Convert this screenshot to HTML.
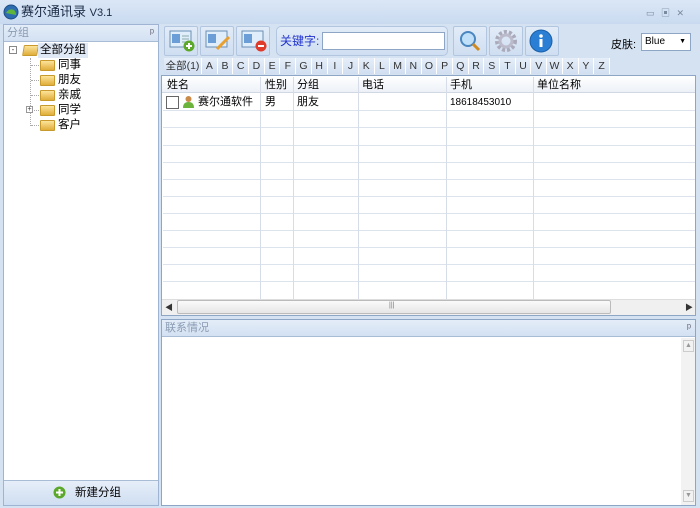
<!DOCTYPE html>
<html><head><meta charset="utf-8"><style>
*{margin:0;padding:0;box-sizing:border-box}
body{width:700px;height:508px;overflow:hidden;background:#d5e2f2;font-family:"Liberation Sans","Noto Sans CJK SC",sans-serif;font-size:11px;color:#000;position:relative}
.a{position:absolute}
.title{left:0;top:0;width:700px;height:24px;background:linear-gradient(#dbe7f6,#c9daf0);}
.hdr{background:linear-gradient(#e4edf8,#d3e1f3);color:#8a9bb3;font-size:11px;padding-left:3px;line-height:16px}
.tb{border:1px solid #b3c6e0;background:linear-gradient(#e2ecf8,#cfdef1);border-radius:2px}
.let{top:58px;height:16px;line-height:16px;font-size:10.5px;color:#333;text-align:center;background:linear-gradient(#e6eef9,#d1dff1);border-right:1px solid #fff}
.vl{top:77px;width:1px;height:222px;background:#d6dde8}
.hl{left:163px;width:532px;height:1px;background:#dde3ec}
.folder{width:15px;height:11px;background:linear-gradient(#fbe49a,#e0ad3a);border:1px solid #c89a2c;border-radius:1px}
.hd{width:8px;height:1px;border-top:1px dotted #aaa}
</style></head><body>
<div class="a title"></div>
<svg class="a" style="left:3px;top:4px" width="16" height="16"><circle cx="8" cy="8" r="7" fill="#2e6cb0"/><path d="M3 9q3-5 8-3q2 2 2 5" fill="#5fb53a"/><circle cx="8" cy="8" r="7" fill="none" stroke="#1d4d86"/></svg>
<div class="a" style="left:21px;top:4px;font-size:13px;color:#1a2b45;line-height:16px">赛尔通讯录 <span style="font-size:11px">V3.1</span></div>
<div class="a" style="left:646px;top:6px;font-size:9px;color:#7a8aa0;letter-spacing:2px">▭ ▣ ✕</div>

<!-- left panel -->
<div class="a" style="left:3px;top:24px;width:156px;height:482px;border:1px solid #9fb4d2;background:#fff"></div>
<div class="a hdr" style="left:4px;top:25px;width:154px;height:16px">分组<span style="position:absolute;right:4px;color:#667">ᵖ</span></div>
<div class="a" style="left:4px;top:41px;width:154px;height:1px;background:#a9bcd6"></div>
<div class="a" style="left:9px;top:46px;width:8px;height:8px;border:1px solid #888;font-size:8px;line-height:6px;text-align:center;color:#333">-</div>
<div class="a folder" style="left:23px;top:45px;transform:skewX(-10deg)"></div>
<div class="a" style="left:38px;top:43px;background:#dfe8f5;padding:0 2px;line-height:15px;font-size:11.5px">全部分组</div>
<div class="a" style="left:30px;top:58px;width:1px;height:68px;border-left:1px dotted #aaa"></div>
<div class="a hd" style="left:31px;top:65px"></div><div class="a hd" style="left:31px;top:80px"></div><div class="a hd" style="left:31px;top:95px"></div><div class="a hd" style="left:34px;top:110px;width:5px"></div><div class="a hd" style="left:31px;top:125px"></div>
<div class="a folder" style="left:40px;top:60px"></div><div class="a" style="left:58px;top:58px;font-size:11.5px;line-height:15px">同事</div>
<div class="a folder" style="left:40px;top:75px"></div><div class="a" style="left:58px;top:73px;font-size:11.5px;line-height:15px">朋友</div>
<div class="a folder" style="left:40px;top:90px"></div><div class="a" style="left:58px;top:88px;font-size:11.5px;line-height:15px">亲戚</div>
<div class="a" style="left:26px;top:106px;width:7px;height:7px;border:1px solid #999;font-size:7px;line-height:5px;text-align:center;color:#333;background:#fff">+</div>
<div class="a folder" style="left:40px;top:105px"></div><div class="a" style="left:58px;top:103px;font-size:11.5px;line-height:15px">同学</div>
<div class="a folder" style="left:40px;top:120px"></div><div class="a" style="left:58px;top:118px;font-size:11.5px;line-height:15px">客户</div>
<div class="a" style="left:4px;top:480px;width:154px;height:25px;background:linear-gradient(#e6eef9,#cfdef1);border-top:1px solid #a9bcd6"></div>
<svg class="a" style="left:53px;top:486px" width="13" height="13"><circle cx="6.5" cy="6.5" r="6" fill="#5ba82a"/><path d="M6.5 3v7M3 6.5h7" stroke="#fff" stroke-width="2"/></svg>
<div class="a" style="left:75px;top:485px;font-size:11.5px;line-height:16px">新建分组</div>

<!-- toolbar -->
<div class="a tb" style="left:164px;top:26px;width:34px;height:30px"></div>
<div class="a tb" style="left:200px;top:26px;width:34px;height:30px"></div>
<div class="a tb" style="left:236px;top:26px;width:34px;height:30px"></div>
<svg class="a" style="left:169px;top:29px" width="28" height="24"><rect x="1" y="2" width="21" height="16" fill="#dfeefa" stroke="#6b8fb6"/><rect x="3" y="5" width="8" height="9" fill="#6b9ed6"/><path d="M13 7h7M13 10h7M13 13h5" stroke="#8aa"/><circle cx="20" cy="17" r="5.5" fill="#5ba82a"/><path d="M20 14v6M17 17h6" stroke="#fff" stroke-width="2"/></svg>
<svg class="a" style="left:205px;top:29px" width="28" height="24"><rect x="1" y="2" width="21" height="16" fill="#dfeefa" stroke="#6b8fb6"/><rect x="3" y="5" width="8" height="9" fill="#6b9ed6"/><path d="M12 20l12-12" stroke="#e8a030" stroke-width="3"/></svg>
<svg class="a" style="left:241px;top:29px" width="28" height="24"><rect x="1" y="2" width="21" height="16" fill="#dfeefa" stroke="#6b8fb6"/><rect x="3" y="5" width="8" height="9" fill="#6b9ed6"/><circle cx="20" cy="17" r="5.5" fill="#e03a2a"/><path d="M17 17h6" stroke="#fff" stroke-width="2"/></svg>
<div class="a tb" style="left:276px;top:26px;width:172px;height:30px;border-radius:5px"></div>
<div class="a" style="left:280px;top:33px;color:#2233cc;font-size:12px;line-height:16px">关键字:</div>
<div class="a" style="left:322px;top:32px;width:123px;height:18px;background:#fff;border:1px solid #8ea6c6"></div>
<div class="a tb" style="left:453px;top:26px;width:34px;height:30px"></div>
<div class="a tb" style="left:489px;top:26px;width:34px;height:30px"></div>
<div class="a tb" style="left:525px;top:26px;width:34px;height:30px"></div>
<svg class="a" style="left:458px;top:29px" width="24" height="24"><circle cx="10" cy="10" r="7" fill="#bfe0f8" stroke="#4a86c0" stroke-width="2"/><path d="M15 15l6 6" stroke="#d08a20" stroke-width="3"/></svg>
<svg class="a" style="left:494px;top:29px" width="24" height="24"><circle cx="12" cy="12" r="9" fill="none" stroke="#aab" stroke-width="4" stroke-dasharray="3 2"/><circle cx="12" cy="12" r="6" fill="none" stroke="#bbc" stroke-width="3"/></svg>
<svg class="a" style="left:529px;top:29px" width="24" height="24"><circle cx="12" cy="12" r="11" fill="#2a7fd4" stroke="#1a5fa8"/><rect x="10.5" y="10" width="3" height="8" fill="#fff"/><circle cx="12" cy="7" r="1.8" fill="#fff"/></svg>
<div class="a" style="left:611px;top:36px;font-size:11px">皮肤:</div>
<div class="a" style="left:641px;top:33px;width:50px;height:18px;background:#fff;border:1px solid #8ea6c6;font-size:10px;line-height:16px;padding-left:3px">Blue<span style="position:absolute;right:4px;font-size:7px">▼</span></div>

<!-- letters -->
<div class="a let" style="left:164px;width:38px">全部(1)</div>
<div class="a" style="left:202px;top:58px;width:408px;height:16px;font-size:10.5px;color:#333;line-height:16px;display:flex;background:linear-gradient(#e6eef9,#d1dff1)">
<span style="flex:1;text-align:center;border-right:1px solid #fff">A</span><span style="flex:1;text-align:center;border-right:1px solid #fff">B</span><span style="flex:1;text-align:center;border-right:1px solid #fff">C</span><span style="flex:1;text-align:center;border-right:1px solid #fff">D</span><span style="flex:1;text-align:center;border-right:1px solid #fff">E</span><span style="flex:1;text-align:center;border-right:1px solid #fff">F</span><span style="flex:1;text-align:center;border-right:1px solid #fff">G</span><span style="flex:1;text-align:center;border-right:1px solid #fff">H</span><span style="flex:1;text-align:center;border-right:1px solid #fff">I</span><span style="flex:1;text-align:center;border-right:1px solid #fff">J</span><span style="flex:1;text-align:center;border-right:1px solid #fff">K</span><span style="flex:1;text-align:center;border-right:1px solid #fff">L</span><span style="flex:1;text-align:center;border-right:1px solid #fff">M</span><span style="flex:1;text-align:center;border-right:1px solid #fff">N</span><span style="flex:1;text-align:center;border-right:1px solid #fff">O</span><span style="flex:1;text-align:center;border-right:1px solid #fff">P</span><span style="flex:1;text-align:center;border-right:1px solid #fff">Q</span><span style="flex:1;text-align:center;border-right:1px solid #fff">R</span><span style="flex:1;text-align:center;border-right:1px solid #fff">S</span><span style="flex:1;text-align:center;border-right:1px solid #fff">T</span><span style="flex:1;text-align:center;border-right:1px solid #fff">U</span><span style="flex:1;text-align:center;border-right:1px solid #fff">V</span><span style="flex:1;text-align:center;border-right:1px solid #fff">W</span><span style="flex:1;text-align:center;border-right:1px solid #fff">X</span><span style="flex:1;text-align:center;border-right:1px solid #fff">Y</span><span style="flex:1;text-align:center;border-right:1px solid #fff">Z</span></div>

<!-- grid -->
<div class="a" style="left:161px;top:75px;width:535px;height:241px;border:1px solid #8ea6c6;background:#fff"></div>
<div class="a" style="left:162px;top:76px;width:533px;height:17px;background:linear-gradient(#fff,#edf1f7);border-bottom:1px solid #d0d8e4"></div>
<div class="a hl" style="top:110px"></div><div class="a hl" style="top:127px"></div><div class="a hl" style="top:145px"></div><div class="a hl" style="top:162px"></div><div class="a hl" style="top:179px"></div><div class="a hl" style="top:196px"></div><div class="a hl" style="top:213px"></div><div class="a hl" style="top:230px"></div><div class="a hl" style="top:247px"></div><div class="a hl" style="top:264px"></div><div class="a hl" style="top:281px"></div>
<div class="a vl" style="left:260px"></div><div class="a vl" style="left:293px"></div><div class="a vl" style="left:358px"></div><div class="a vl" style="left:446px"></div><div class="a vl" style="left:533px"></div>
<div class="a" style="left:167px;top:79px;line-height:13px">姓名</div>
<div class="a" style="left:265px;top:79px;line-height:13px">性别</div>
<div class="a" style="left:297px;top:79px;line-height:13px">分组</div>
<div class="a" style="left:362px;top:79px;line-height:13px">电话</div>
<div class="a" style="left:450px;top:79px;line-height:13px">手机</div>
<div class="a" style="left:537px;top:79px;line-height:13px">单位名称</div>
<div class="a" style="left:166px;top:96px;width:13px;height:13px;border:1px solid #666;background:#fff"></div>
<svg class="a" style="left:182px;top:95px" width="13" height="14"><circle cx="6.5" cy="4" r="3" fill="#c98b4a"/><path d="M1 13q0-6 5.5-6t5.5 6z" fill="#6bb33a"/></svg>
<div class="a" style="left:198px;top:96px;line-height:13px">赛尔通软件</div>
<div class="a" style="left:265px;top:96px;line-height:13px">男</div>
<div class="a" style="left:297px;top:96px;line-height:13px">朋友</div>
<div class="a" style="left:450px;top:97px;font-size:10px;line-height:12px">18618453010</div>
<div class="a" style="left:162px;top:299px;width:533px;height:16px;background:#f0f0f0;border-top:1px solid #ddd"></div>
<div class="a" style="left:165px;top:302px;font-size:8px;color:#333">◀</div>
<div class="a" style="left:685px;top:302px;font-size:8px;color:#333">▶</div>
<div class="a" style="left:177px;top:300px;width:434px;height:14px;border:1px solid #bbb;border-radius:2px;background:linear-gradient(#fafafa,#e6e6e6)"></div>
<div class="a" style="left:389px;top:302px;font-size:7px;color:#777">|||</div>

<!-- bottom panel -->
<div class="a" style="left:161px;top:319px;width:535px;height:187px;border:1px solid #8ea6c6;background:#fff"></div>
<div class="a hdr" style="left:162px;top:320px;width:533px;height:17px;border-bottom:1px solid #a9bcd6">联系情况<span style="position:absolute;right:4px;color:#667">ᵖ</span></div>
<div class="a" style="left:681px;top:338px;width:14px;height:167px;background:#f2f2f2"></div>
<div class="a" style="left:683px;top:340px;width:11px;height:12px;border:1px solid #ccc;font-size:7px;text-align:center;color:#999;line-height:10px">▲</div>
<div class="a" style="left:683px;top:490px;width:11px;height:12px;border:1px solid #ccc;font-size:7px;text-align:center;color:#999;line-height:10px">▼</div>
</body></html>
